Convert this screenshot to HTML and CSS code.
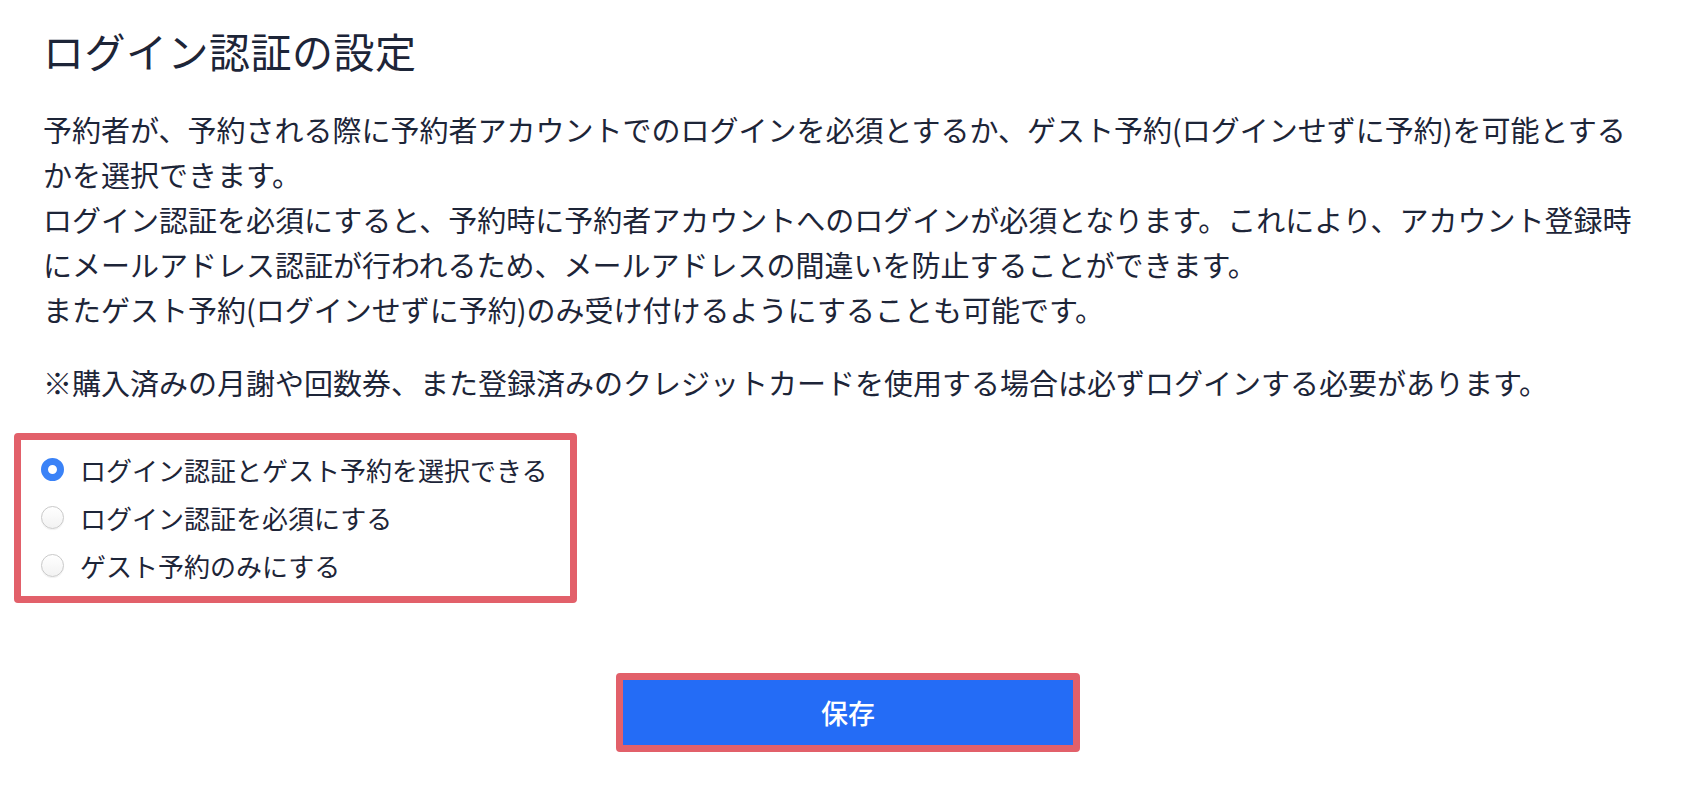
FILE: index.html
```html
<!DOCTYPE html>
<html lang="ja">
<head>
<meta charset="utf-8">
<title>ログイン認証の設定</title>
<link rel="stylesheet" href="styles.css">
</head>
<body>
<div class="page">
  <h1 class="title">ログイン認証の設定</h1>
  <p class="desc">予約者が、予約される際に予約者アカウントでのログインを必須とするか、ゲスト予約(ログインせずに予約)を可能とするかを選択できます。<br>ログイン認証を必須にすると、予約時に予約者アカウントへのログインが必須となります。これにより、アカウント登録時にメールアドレス認証が行われるため、メールアドレスの間違いを防止することができます。<br>またゲスト予約(ログインせずに予約)のみ受け付けるようにすることも可能です。</p>
  <p class="note">※購入済みの月謝や回数券、また登録済みのクレジットカードを使用する場合は必ずログインする必要があります。</p>
  <div class="options">
    <label class="option"><input class="radio-input" type="radio" name="auth" checked><span class="radio"></span><span class="option-text">ログイン認証とゲスト予約を選択できる</span></label>
    <label class="option"><input class="radio-input" type="radio" name="auth"><span class="radio"></span><span class="option-text">ログイン認証を必須にする</span></label>
    <label class="option"><input class="radio-input" type="radio" name="auth"><span class="radio"></span><span class="option-text">ゲスト予約のみにする</span></label>
  </div>
  <div class="actions">
    <div class="btn-frame"><button class="save" type="button">保存</button></div>
  </div>
</div>
</body>
</html>
```

FILE: styles.css
```css
html, body {
  margin: 0;
  padding: 0;
  background: #ffffff;
}

body {
  font-family: "Noto Sans CJK JP", "Noto Sans", sans-serif;
  color: #1d2538;
}

.page {
  padding: 20px 29px 0 43px;
}

.title {
  margin: 0;
  font-size: 41px;
  line-height: 60px;
  font-weight: 400;
  letter-spacing: 0.5px;
}

.desc {
  margin: 27px 0 0;
  font-size: 29px;
  line-height: 45px;
}

.note {
  margin: 28px 0 0;
  font-size: 29px;
  line-height: 45px;
}

.options {
  box-sizing: border-box;
  width: 563px;
  margin: 28px 0 0 -29px;
  padding: 5px 0 7px 20px;
  border: 7px solid #e2606a;
  border-radius: 4px;
  display: flex;
  flex-direction: column;
}

.option {
  display: flex;
  align-items: center;
  gap: 16px;
  height: 48px;
  font-size: 26px;
  cursor: pointer;
}

.radio-input {
  position: absolute;
  opacity: 0;
  width: 0;
  height: 0;
  margin: 0;
}

.radio {
  box-sizing: border-box;
  flex: none;
  width: 23px;
  height: 23px;
  border-radius: 50%;
  border: 1.5px solid #c9c9c9;
  background: linear-gradient(#ffffff, #f2f2f2);
  box-shadow: 0 1px 1px rgba(0, 0, 0, 0.06);
}

.radio-input:checked + .radio {
  border: 7.5px solid #3a82f7;
  background: #ffffff;
  box-shadow: none;
}

.actions {
  margin-top: 70px;
  display: flex;
  justify-content: center;
}

.btn-frame {
  border: 7px solid #e2606a;
  border-radius: 4px;
}

.save {
  display: block;
  width: 450px;
  height: 65px;
  border: none;
  margin: 0;
  background: #246cf6;
  color: #ffffff;
  font-family: "Noto Sans CJK JP", "Noto Sans", sans-serif;
  font-size: 27px;
  font-weight: 500;
  cursor: pointer;
}
```
